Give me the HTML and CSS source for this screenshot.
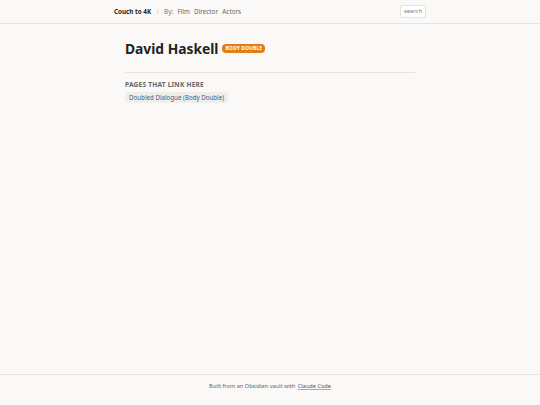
FILE: index.html
```html
<!DOCTYPE html>
<html>
<head>
<meta charset="utf-8">
<link rel="stylesheet" href="styles.css">
</head>
<body>
<div class="page">
  <header class="site-header">
    <div class="wrap header-inner">
      <nav class="nav">
        <a class="brand" href="#">Couch to 4K</a>
        <span class="sep">/</span>
        <span class="by">By:</span>
        <a class="nav-link" href="#">Film</a>
        <a class="nav-link" href="#">Director</a>
        <a class="nav-link" href="#">Actors</a>
      </nav>
      <button class="search">search</button>
    </div>
  </header>
  <main class="wrap main">
    <div class="content">
      <h1 class="title">David Haskell <span class="badge">BODY DOUBLE</span></h1>
      <hr class="rule">
      <h2 class="section-title">PAGES THAT LINK HERE</h2>
      <div class="backlinks">
        <a class="chip" href="#">Doubled Dialogue (Body Double)</a>
      </div>
    </div>
  </main>
  <footer class="site-footer">
    Built from an Obsidian vault with <a class="footer-link" href="#">Claude Code</a>
  </footer>
</div>
</body>
</html>
```
FILE: styles.css
```css
* { box-sizing: border-box; }
html, body { margin: 0; padding: 0; }
body {
  background: #faf9f7;
  font-family: "Noto Sans", "Open Sans", sans-serif;
  color: #2a2a2a;
}
a { text-decoration: none; }
.page {
  min-height: 405px;
  display: flex;
  flex-direction: column;
}
.wrap {
  width: 312px;
  margin: 0 auto;
}
.site-header {
  height: 24px;
  border-bottom: 1px solid #e6e4e0;
}
.header-inner {
  height: 23px;
  display: flex;
  align-items: center;
  justify-content: space-between;
}
.nav {
  display: flex;
  align-items: center;
  gap: 4.3px;
  font-size: 6.3px;
}
.brand {
  color: #222;
  font-weight: 700;
}
.sep { color: #c8c6c2; margin: 0 1px; }
.by { color: #777; }
.nav-link { color: #666; }
.search {
  font-family: inherit;
  font-size: 5.8px;
  color: #777;
  background: #fff;
  border: 1px solid #e4e2de;
  border-radius: 2px;
  padding: 2px 3px;
  height: 13px;
  line-height: 1;
}
.main { flex: 1; }
.content { padding: 15px 11px 0; }
.title {
  margin: 0;
  font-size: 13.8px;
  font-weight: 700;
  color: #222;
  display: flex;
  align-items: center;
  gap: 4px;
  line-height: 1.4;
}
.badge {
  display: inline-block;
  background: #e07e1c;
  color: #fff;
  font-size: 5px;
  font-weight: 700;
  padding: 1px 3px;
  border-radius: 4px;
  letter-spacing: 0.1px;
  line-height: 1.3;
}
.rule {
  border: 0;
  border-top: 1px solid #e6e4e0;
  margin: 14px 0 7px;
}
.section-title {
  margin: 0 0 3px;
  font-size: 6.6px;
  font-weight: 700;
  color: #666;
  letter-spacing: 0.2px;
}
.backlinks { display: flex; }
.chip {
  display: inline-block;
  background: #efeeeb;
  color: #3b5e8c;
  font-size: 6.2px;
  padding: 1px 4px;
  border-radius: 2px;
}
.site-footer {
  border-top: 1px solid #e6e4e0;
  height: 31px;
  padding-top: 7px;
  text-align: center;
  font-size: 5.6px;
  color: #666;
}
.footer-link {
  color: #555;
  text-decoration: underline;
  text-decoration-color: #aaa;
  margin-left: 1px;
}
```
